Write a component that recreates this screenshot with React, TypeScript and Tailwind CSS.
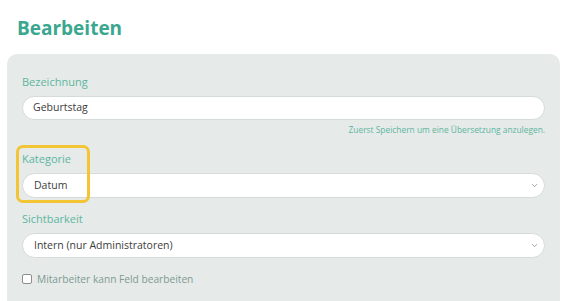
import { ChevronDown } from 'lucide-react'

const font = { fontFamily: '"Open Sans", "DejaVu Sans", sans-serif' }

function SelectBox({ value }: { value: string }) {
  return (
    <div className="flex h-[25px] items-center justify-between rounded-full border border-[#d5dbd9] bg-white pl-[11px] pr-[5px] text-[10.5px] text-[#3c3c3c]">
      <span>{value}</span>
      <ChevronDown className="h-[9px] w-[9px] text-[#8a8a8a]" strokeWidth={2} />
    </div>
  )
}

export default function App() {
  return (
    <div className="min-h-[301px] bg-white px-[7px] pt-[16px]" style={font}>
      <h1 className="pl-[10px] text-[19px] font-bold leading-[24px] text-[#3aa78e]">Bearbeiten</h1>

      <div className="mt-[14px] w-[553px] rounded-t-[10px] bg-[#e6eae9] px-[15px] pb-[20px] pt-[21px]">
        {/* Bezeichnung */}
        <label className="block text-[11px] leading-[14px] text-[#5db6a0]">Bezeichnung</label>
        <div className="mt-[7px] flex h-[24px] items-center rounded-full border border-[#d5dbd9] bg-white pl-[10px] text-[10.5px] text-[#3c3c3c]">
          Geburtstag
        </div>
        <p className="mt-[4px] text-right text-[8.4px] leading-[12px] text-[#5db6a0]">
          Zuerst Speichern um eine Übersetzung anzulegen.
        </p>

        {/* Kategorie */}
        <div className="relative mt-[16px]">
          <div className="pointer-events-none absolute left-[-6px] top-[-7px] h-[58px] w-[74px] rounded-[7px] border-[3px] border-[#f3c433]" />
          <label className="block text-[11px] leading-[14px] text-[#5db6a0]">Kategorie</label>
          <div className="mt-[7px]">
            <SelectBox value="Datum" />
          </div>
        </div>

        {/* Sichtbarkeit */}
        <label className="mt-[14px] block text-[11px] leading-[14px] text-[#5db6a0]">Sichtbarkeit</label>
        <div className="mt-[7px]">
          <SelectBox value="Intern (nur Administratoren)" />
        </div>

        {/* Checkbox */}
        <div className="mt-[14px] flex items-center gap-[5px]">
          <span className="h-[10px] w-[10px] rounded-[2px] border border-[#8a8f8d] bg-white" />
          <span className="text-[10.2px] leading-[14px] text-[#7e9a92]">Mitarbeiter kann Feld bearbeiten</span>
        </div>
      </div>
    </div>
  )
}
